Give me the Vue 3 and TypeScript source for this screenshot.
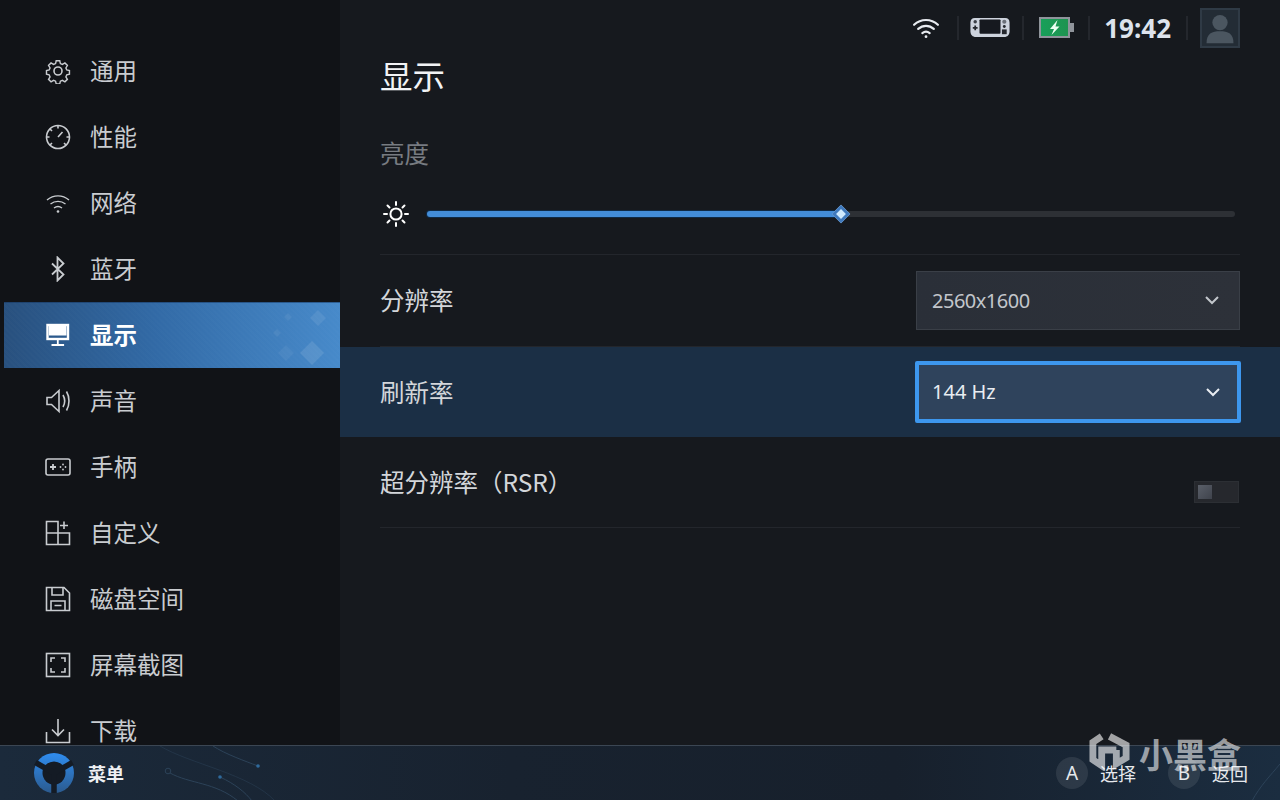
<template>
  <div class="screen">
    <div class="body">
      <nav class="sidebar">
        <div v-for="item in navItems" :key="item.label" class="nav-item" :class="{ active: item.active }">
          <svg class="nav-icon" viewBox="0 0 26 26" fill="none" stroke="currentColor" stroke-width="1.6" v-html="item.icon"></svg>
          <span class="nav-text">{{ item.label }}</span>
          <svg v-if="item.active" class="diamonds" viewBox="0 0 80 66" fill="#ffffff">
            <path d="M52 39 l12 12 l-12 12 l-12 -12z" opacity=".1" />
            <path d="M26 43 l8 8 l-8 8 l-8 -8z" opacity=".05" />
            <path d="M58 8 l8 8 l-8 8 l-8 -8z" opacity=".08" />
            <path d="M28 11 l4 4 l-4 4 l-4 -4z" opacity=".06" />
            <path d="M17 27 l4 4 l-4 4 l-4 -4z" opacity=".06" />
          </svg>
        </div>
      </nav>

      <main class="content">
        <header class="statusbar">
          <svg class="st-wifi" viewBox="0 0 30 24" fill="none" stroke="#e8ebf0" stroke-width="2.4" stroke-linecap="round">
            <path d="M2 8.500 C9.500 1.500 20.500 1.500 28 8.500" />
            <path d="M6.500 13 C11.500 8.500 18.500 8.500 23.500 13" />
            <path d="M11 17.500 C13.500 15.500 16.500 15.500 19 17.500" />
            <circle cx="15" cy="21.500" r="1.500" fill="#e8ebf0" stroke="none" />
          </svg>
          <i class="sep"></i>
          <svg class="st-device" viewBox="0 0 42 22">
            <path d="M5 1 H37 C40 1 41.500 3 41.500 6 V15 C41.500 19 39 21 36 21 H6 C3 21 .5 19 .5 15 V6 C.5 3 2 1 5 1z" fill="#cdd3dd" />
            <rect x="10" y="2.500" width="22" height="15" rx="1" fill="#16191f" />
            <circle cx="5.500" cy="5" r="1.800" fill="#3c4048" />
            <path d="M3 11.500h5M5.500 9v5" stroke="#24272d" stroke-width="1.800" />
            <circle cx="36" cy="5" r="2.200" fill="#6b7079" />
            <circle cx="36" cy="10" r="1.500" fill="#24272d" />
            <rect x="33.500" y="13" width="5" height="5" fill="#24272d" />
          </svg>
          <i class="sep"></i>
          <svg class="st-battery" viewBox="0 0 35 21">
            <defs>
              <linearGradient id="batteryGreen" x1="0" y1="0" x2="1" y2="0">
                <stop offset="0" stop-color="#17a05a" />
                <stop offset="1" stop-color="#1f9350" />
              </linearGradient>
            </defs>
            <rect x="1" y="1" width="29" height="19" fill="url(#batteryGreen)" stroke="#8f949b" stroke-width="2" />
            <rect x="31" y="6" width="4" height="9" fill="#8f949b" />
            <path d="M18.500 3 L11 12 H15 L12.500 18 L20.500 9.500 H16.500z" fill="#eafff2" />
          </svg>
          <i class="sep"></i>
          <span class="clock">19:42</span>
          <i class="sep"></i>
          <div class="avatar">
            <svg viewBox="0 0 40 40" fill="#4b5660">
              <circle cx="20" cy="14" r="8.500" />
              <path d="M5 37 C5 26 11 23.500 20 23.500 C29 23.500 35 26 35 37z" />
            </svg>
          </div>
        </header>

        <h1 class="title">显示</h1>

        <section class="brightness">
          <div class="brightness-label">亮度</div>
          <div class="slider-line">
            <svg class="sun" viewBox="0 0 28 28" fill="none" stroke="#ffffff" stroke-width="2" stroke-linecap="round">
              <circle cx="14" cy="14" r="5.600" />
              <path d="M14 2v3M14 23v3M2 14h3M23 14h3M5.500 5.500l2 2M20.500 20.500l2 2M5.500 22.500l2-2M20.500 7.500l2-2" />
            </svg>
            <div class="track">
              <div class="fill" :style="{ width: brightness + '%' }"></div>
              <div class="thumb" :style="{ left: brightness + '%' }"></div>
            </div>
          </div>
        </section>

        <div class="row">
          <span class="row-label">分辨率</span>
          <div class="select">
            <span class="res">2560x1600</span>
            <svg class="chev" viewBox="0 0 16 10" fill="none" stroke="currentColor" stroke-width="2"><path d="M2 2l6 6 6-6" /></svg>
          </div>
        </div>

        <div class="row focused">
          <span class="row-label">刷新率</span>
          <div class="select">
            <span>144 Hz</span>
            <svg class="chev" viewBox="0 0 16 10" fill="none" stroke="currentColor" stroke-width="2"><path d="M2 2l6 6 6-6" /></svg>
          </div>
        </div>

        <div class="row last">
          <span class="row-label">超分辨率（RSR）</span>
          <div class="toggle"><div class="knob"></div></div>
        </div>
      </main>
    </div>

    <footer class="footer">
      <svg class="circuits" viewBox="0 0 300 55" fill="none" stroke="#2c4258" stroke-width="1">
        <path d="M213 0 C225 8 245 15 258 20" />
        <path d="M160 0 C190 18 250 28 275 55" opacity=".5" />
        <circle cx="168" cy="25" r="2.800" />
        <path d="M170 27 C190 38 215 36 238 55" />
        <path d="M220 31 C235 38 245 46 252 55" />
        <circle cx="258" cy="20" r="1.800" fill="#2f6a9c" stroke="none" />
        <circle cx="220" cy="31" r="1.800" fill="#2f6a9c" stroke="none" />
      </svg>
      <div class="menu">
        <svg class="logo" viewBox="0 0 40 40">
          <defs>
            <linearGradient id="logoBlue" x1="0" y1="0" x2="0" y2="1">
              <stop offset="0" stop-color="#2f8df0" />
              <stop offset="1" stop-color="#2b5a8e" />
            </linearGradient>
          </defs>
          <circle cx="20" cy="20" r="20" fill="url(#logoBlue)" />
          <circle cx="20" cy="20" r="11.500" fill="#141b25" />
          <path d="M20 20V40M20 20L1.500 9.500M20 20L38.500 9.500" stroke="#141b25" stroke-width="5.500" />
        </svg>
        <span>菜单</span>
      </div>
      <div class="hints">
        <div class="hint"><b class="btn">A</b><span>选择</span></div>
        <div class="hint"><b class="btn">B</b><span>返回</span></div>
      </div>
      <svg class="circuits-right" viewBox="0 0 40 55" fill="none" stroke="#2c4258"><path d="M40 18 C30 30 20 40 12 55" /></svg>
    </footer>

    <div class="watermark">
      <svg viewBox="0 0 42 40" fill="none" stroke="#ffffff" stroke-width="7">
        <path d="M13 5 L4 11 V29 L13 35 V19 H28" />
        <path d="M21 5 L38 14 V27 L28 33 V19" />
      </svg>
      <span>小黑盒</span>
    </div>
  </div>
</template>

<script setup lang="ts">
interface NavItem {
  label: string
  icon: string
  active?: boolean
}

const brightness = 51.2

const navItems: NavItem[] = [
  {
    label: '通用',
    icon: '<circle cx="13" cy="13" r="4"/><path d="M11 1.500h4l.7 3.200 2.300 1 2.800-1.700 2.800 2.800-1.700 2.800 1 2.300 3 .7v4l-3 .7-1 2.300 1.700 2.800-2.800 2.800-2.800-1.700-2.300 1-.7 3h-4l-.7-3-2.300-1-2.800 1.700-2.800-2.800 1.700-2.800-1-2.300-3-.7v-4l3-.7 1-2.300L2.400 6.800l2.800-2.800L8 5.700l2.300-1z" transform="translate(1.400 1.400) scale(.89)"/>',
  },
  {
    label: '性能',
    icon: '<circle cx="13" cy="13" r="11.500"/><path d="M13 13l4.500-5M13 1.500v3M1.500 13h3M21.500 13h3M5 21l2-2M21 21l-2-2M5 5l2 2" />',
  },
  {
    label: '网络',
    icon: '<path d="M2 10c6.500-5.500 15.500-5.500 22 0M5.500 14c4.500-3.500 10.500-3.500 15 0M9 18c2.500-1.800 5.500-1.800 8 0" stroke-width="1.400"/><circle cx="13" cy="21.500" r="1.300" fill="currentColor" stroke="none"/>',
  },
  {
    label: '蓝牙',
    icon: '<path d="M7 7.500l11.500 11L12.500 24.500V1.500l6 6L7 18.500" stroke-width="1.800"/>',
  },
  {
    label: '显示',
    icon: '<rect x="2.500" y="3" width="20.500" height="14" stroke-width="2.400"/><rect x="4" y="4" width="17.500" height="9.500" fill="currentColor" stroke="none"/><path d="M12.800 17v6M6.500 23h12.600" stroke-width="1.800"/>',
    active: true,
  },
  {
    label: '声音',
    icon: '<path d="M2 9.500h4.500L14 2.500v21l-7.500-7H2zM18 7c2 3.500 2 8.500 0 12M21.500 3.500c3.300 5.500 3.300 13.500 0 19"/>',
  },
  {
    label: '手柄',
    icon: '<rect x="1" y="5" width="24" height="16" rx="2"/><path d="M5 13h6M8 10v6" stroke-width="1.800"/><circle cx="18" cy="10.500" r=".9" fill="currentColor" stroke="none"/><circle cx="18" cy="15.500" r=".9" fill="currentColor" stroke="none"/><circle cx="15.500" cy="13" r=".9" fill="currentColor" stroke="none"/><circle cx="20.500" cy="13" r=".9" fill="currentColor" stroke="none"/>',
  },
  {
    label: '自定义',
    icon: '<path d="M1.500 1.500H13V24.500H1.500zM1.500 13H24.500V24.500H13M19 1.500V9M15 5.500h8"/>',
  },
  {
    label: '磁盘空间',
    icon: '<path d="M1.500 1.500H19L24.500 7V24.500H1.500z"/><path d="M7 1.500V9H18V1.500M6 24.500V15H20V24.500M9.500 19.500h7"/>',
  },
  {
    label: '屏幕截图',
    icon: '<rect x="1.500" y="1.500" width="23" height="23"/><path d="M6 10V6h4M16 6h4v4M20 16v4h-4M10 20H6v-4"/>',
  },
  {
    label: '下载',
    icon: '<path d="M13 1v16M7 11.500l6 6 6-6M1.500 14v10.500H24.500V14"/>',
  },
]
</script>

<style>
html,
body {
  background: #16191e;
  margin: 0;
}
</style>

<style scoped>
.screen {
  color: #d5d8dc;
  display: grid;
  font-family: "Noto Sans", "Noto Sans CJK SC", sans-serif;
  grid-template-rows: 745px 55px;
  height: 800px;
  overflow: hidden;
  position: relative;
  width: 1280px;
}

.body {
  display: flex;
  min-height: 0;
}

.sidebar {
  background: #111317;
  box-sizing: border-box;
  flex: 0 0 340px;
  overflow: hidden;
  padding: 38px 0 0 4px;
}

.nav-item {
  align-items: center;
  box-sizing: border-box;
  color: #c9ccd0;
  display: flex;
  font-family: "Noto Sans CJK SC", sans-serif;
  font-size: 23.5px;
  font-weight: 400;
  gap: 19px;
  height: 66px;
  padding-left: 41px;
  position: relative;
}

.nav-icon {
  flex: none;
  height: 26px;
  margin-top: -1px;
  width: 26px;
}

.nav-text {
  margin-bottom: 3px;
}

.nav-item.active {
  background:
    repeating-linear-gradient(45deg, rgba(255, 255, 255, 0.012) 0 2px, transparent 2px 4px),
    linear-gradient(90deg, #28507e 0%, #326aa6 45%, #478aca 100%);
  box-shadow: inset 0 1px 0 rgba(20, 50, 90, 0.5);
  color: #fff;
  font-weight: 700;
}

.diamonds {
  height: 66px;
  overflow: visible;
  position: absolute;
  right: 0;
  top: 0;
  width: 80px;
}

.content {
  background: #16191e;
  box-sizing: border-box;
  flex: 1;
  min-width: 0;
  padding: 0 40px;
}

.statusbar {
  align-items: center;
  display: flex;
  height: 55px;
  justify-content: flex-end;
}

.sep {
  background: #24272d;
  flex: none;
  height: 24px;
  width: 2px;
}

.st-wifi {
  height: 22px;
  margin-right: 17px;
  width: 28px;
}

.st-device {
  height: 21px;
  margin: 0 11px 0 10px;
  width: 42px;
}

.st-battery {
  height: 21px;
  margin: 0 14px 0 15px;
  width: 35px;
}

.clock {
  color: #dde3ec;
  font-family: "Noto Sans", sans-serif;
  font-size: 26px;
  font-weight: 700;
  line-height: 1;
  margin: 0 15px 0 14px;
}

.avatar {
  background: #232c35;
  border: 2px solid #2f3a45;
  box-sizing: border-box;
  height: 40px;
  margin-left: 12px;
  overflow: hidden;
  width: 40px;
}

.avatar svg {
  display: block;
  height: 36px;
  width: 36px;
}

.title {
  color: #f2f3f5;
  font-family: "Noto Sans CJK SC", sans-serif;
  font-size: 32.5px;
  font-weight: 400;
  line-height: 44px;
  margin: -2px 0 2px;
}

.brightness {
  border-bottom: 1px solid #23262c;
  box-sizing: border-box;
  height: 156px;
}

.brightness-label {
  color: #777b81;
  font-family: "Noto Sans CJK SC", sans-serif;
  font-size: 24.5px;
  font-weight: 400;
  line-height: 34px;
  padding-top: 37px;
}

.slider-line {
  align-items: center;
  display: flex;
  gap: 17px;
  height: 28px;
  margin-top: 30px;
}

.sun {
  flex: none;
  height: 28px;
  margin-left: 2px;
  width: 28px;
}

.track {
  background: #2d3035;
  border-radius: 3px;
  flex: 1;
  height: 6px;
  margin-right: 5px;
  position: relative;
}

.fill {
  background: #438dd9;
  border-radius: 3px;
  box-shadow: 0 0 0 1px #0f2a46;
  height: 100%;
}

.thumb {
  background: #cfeaff;
  border: 3px solid #3f79bd;
  box-sizing: border-box;
  height: 13px;
  position: absolute;
  top: 50%;
  transform: translate(-50%, -50%) rotate(45deg);
  width: 13px;
}

.row {
  align-items: center;
  border-bottom: 1px solid #23262c;
  box-sizing: border-box;
  display: flex;
  font-family: "Noto Sans CJK SC", sans-serif;
  height: 92px;
  justify-content: space-between;
}

.row-label {
  color: #d3d6da;
  font-size: 24.5px;
  font-weight: 400;
  margin-bottom: 2px;
}

.select {
  align-items: center;
  background: linear-gradient(90deg, #2a2f38, #2d3139);
  border: 1px solid #3a3f47;
  box-sizing: border-box;
  color: #c2c6cb;
  display: flex;
  font-family: "Noto Sans", sans-serif;
  font-size: 20px;
  font-weight: 400;
  height: 59px;
  justify-content: space-between;
  margin-top: -1px;
  padding: 0 19px 0 15px;
  width: 324px;
}

.res {
  letter-spacing: -0.5px;
}

.chev {
  height: 10px;
  width: 16px;
}

.focused {
  background: #1b2f45;
  border-bottom: 0;
  height: 90px;
  margin: 0 -40px;
  padding: 0 39px 0 40px;
}

.focused .select {
  background: #2f435c;
  border: 4px solid #3d97ee;
  border-radius: 2px;
  color: #e8ecf1;
  height: 62px;
  padding: 0 16px 0 13px;
  width: 326px;
}

.last {
  height: 91px;
}

.toggle {
  background: #26282d;
  border: 1px solid #2c2f34;
  box-sizing: border-box;
  height: 22px;
  margin: 20px 1px 0 0;
  padding: 3px;
  width: 45px;
}

.knob {
  background: linear-gradient(135deg, #5a5f69, #3f434c);
  height: 14px;
  width: 14px;
}

.footer {
  align-items: center;
  background: linear-gradient(90deg, #1b2a3b 0%, #18222f 40%, #17202c 70%, #1b2d40 100%);
  border-top: 1px solid #3b4653;
  box-sizing: border-box;
  display: flex;
  font-family: "Noto Sans CJK SC", sans-serif;
  justify-content: space-between;
  padding: 0 32px 0 34px;
  position: relative;
}

.circuits {
  height: 55px;
  left: 0;
  position: absolute;
  top: 0;
  width: 300px;
}

.circuits-right {
  height: 55px;
  position: absolute;
  right: 0;
  top: 0;
  width: 40px;
}

.menu {
  align-items: center;
  color: #eef0f3;
  display: flex;
  font-size: 18px;
  font-weight: 700;
  gap: 14px;
  position: relative;
}

.logo {
  height: 40px;
  width: 40px;
}

.hints {
  display: flex;
  gap: 32px;
  position: relative;
}

.hint {
  align-items: center;
  color: #e6e9ed;
  display: flex;
  font-size: 18px;
  font-weight: 400;
  gap: 12px;
}

.btn {
  align-items: center;
  background: rgba(255, 255, 255, 0.09);
  border-radius: 50%;
  display: flex;
  font-family: "Noto Sans", sans-serif;
  font-size: 19px;
  font-weight: 400;
  height: 32px;
  justify-content: center;
  width: 32px;
}

.watermark {
  align-items: center;
  color: rgba(255, 255, 255, 0.58);
  display: flex;
  font-family: "Noto Sans CJK SC", sans-serif;
  font-size: 34px;
  font-weight: 700;
  gap: 9px;
  left: 1089px;
  line-height: 1;
  pointer-events: none;
  position: absolute;
  top: 731px;
}

.watermark span {
  margin-top: 6px;
}

.watermark svg {
  height: 40px;
  opacity: 0.6;
  width: 41px;
}
</style>
